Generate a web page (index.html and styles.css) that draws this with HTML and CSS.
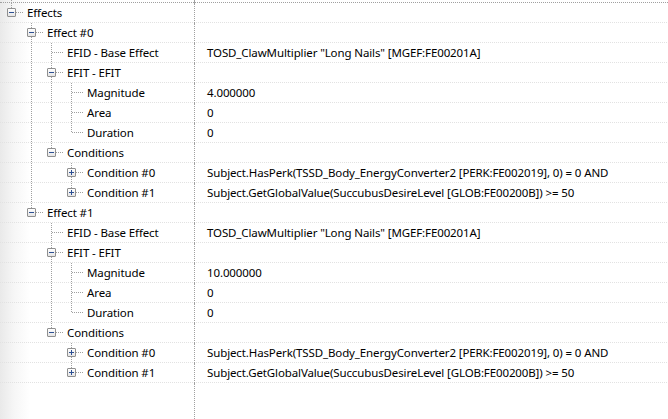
FILE: index.html
```html
<!DOCTYPE html>
<html lang="en">
  <head>
    <meta charset="UTF-8" />
    <title>Record View</title>
    <link rel="stylesheet" href="styles.css">
  </head>
  <body>
    <div class="tree">
      <div class="row pre"><div class="name"></div><div class="value"></div></div>

      <div class="row">
        <div class="name"><span class="conn last"><span class="box"></span></span><span class="label">Effects</span></div>
        <div class="value"></div>
      </div>
      <div class="row">
        <div class="name"><span class="ind"></span><span class="conn mid"><span class="box"></span></span><span class="label">Effect #0</span></div>
        <div class="value"></div>
      </div>
      <div class="row">
        <div class="name"><span class="ind"></span><span class="pipe"></span><span class="conn mid leaf"></span><span class="label">EFID - Base Effect</span></div>
        <div class="value">TOSD_ClawMultiplier "Long Nails" [MGEF:FE00201A]</div>
      </div>
      <div class="row">
        <div class="name"><span class="ind"></span><span class="pipe"></span><span class="conn mid"><span class="box"></span></span><span class="label">EFIT - EFIT</span></div>
        <div class="value"></div>
      </div>
      <div class="row">
        <div class="name"><span class="ind"></span><span class="pipe"></span><span class="pipe"></span><span class="conn mid leaf"></span><span class="label">Magnitude</span></div>
        <div class="value">4.000000</div>
      </div>
      <div class="row">
        <div class="name"><span class="ind"></span><span class="pipe"></span><span class="pipe"></span><span class="conn mid leaf"></span><span class="label">Area</span></div>
        <div class="value">0</div>
      </div>
      <div class="row">
        <div class="name"><span class="ind"></span><span class="pipe"></span><span class="pipe"></span><span class="conn last leaf"></span><span class="label">Duration</span></div>
        <div class="value">0</div>
      </div>
      <div class="row">
        <div class="name"><span class="ind"></span><span class="pipe"></span><span class="conn last"><span class="box"></span></span><span class="label">Conditions</span></div>
        <div class="value"></div>
      </div>
      <div class="row">
        <div class="name"><span class="ind"></span><span class="pipe"></span><span class="ind"></span><span class="conn mid"><span class="box plus"></span></span><span class="label">Condition #0</span></div>
        <div class="value">Subject.HasPerk(TSSD_Body_EnergyConverter2 [PERK:FE002019], 0) = 0 AND</div>
      </div>
      <div class="row">
        <div class="name"><span class="ind"></span><span class="pipe"></span><span class="ind"></span><span class="conn last"><span class="box plus"></span></span><span class="label">Condition #1</span></div>
        <div class="value">Subject.GetGlobalValue(SuccubusDesireLevel [GLOB:FE00200B]) &gt;= 50</div>
      </div>

      <div class="row">
        <div class="name"><span class="ind"></span><span class="conn last"><span class="box"></span></span><span class="label">Effect #1</span></div>
        <div class="value"></div>
      </div>
      <div class="row">
        <div class="name"><span class="ind"></span><span class="ind"></span><span class="conn mid leaf"></span><span class="label">EFID - Base Effect</span></div>
        <div class="value">TOSD_ClawMultiplier "Long Nails" [MGEF:FE00201A]</div>
      </div>
      <div class="row">
        <div class="name"><span class="ind"></span><span class="ind"></span><span class="conn mid"><span class="box"></span></span><span class="label">EFIT - EFIT</span></div>
        <div class="value"></div>
      </div>
      <div class="row">
        <div class="name"><span class="ind"></span><span class="ind"></span><span class="pipe"></span><span class="conn mid leaf"></span><span class="label">Magnitude</span></div>
        <div class="value">10.000000</div>
      </div>
      <div class="row">
        <div class="name"><span class="ind"></span><span class="ind"></span><span class="pipe"></span><span class="conn mid leaf"></span><span class="label">Area</span></div>
        <div class="value">0</div>
      </div>
      <div class="row">
        <div class="name"><span class="ind"></span><span class="ind"></span><span class="pipe"></span><span class="conn last leaf"></span><span class="label">Duration</span></div>
        <div class="value">0</div>
      </div>
      <div class="row">
        <div class="name"><span class="ind"></span><span class="ind"></span><span class="conn last"><span class="box"></span></span><span class="label">Conditions</span></div>
        <div class="value"></div>
      </div>
      <div class="row">
        <div class="name"><span class="ind"></span><span class="ind"></span><span class="ind"></span><span class="conn mid"><span class="box plus"></span></span><span class="label">Condition #0</span></div>
        <div class="value">Subject.HasPerk(TSSD_Body_EnergyConverter2 [PERK:FE002019], 0) = 0 AND</div>
      </div>
      <div class="row">
        <div class="name"><span class="ind"></span><span class="ind"></span><span class="ind"></span><span class="conn last"><span class="box plus"></span></span><span class="label">Condition #1</span></div>
        <div class="value">Subject.GetGlobalValue(SuccubusDesireLevel [GLOB:FE00200B]) &gt;= 50</div>
      </div>

      <div class="row filler"><div class="name"></div><div class="value"></div></div>
    </div>
  </body>
</html>
```

FILE: styles.css
```css
/* Page */
body {
  margin: 0;
  font-family: "Segoe UI", "Noto Sans", sans-serif;
  font-size: 11.5px;
  letter-spacing: -0.12px;
  color: #000000;
  background: linear-gradient(to right, #e9e9e9 0, #f6f6f6 14px, #ffffff 30px);
}

/* Tree grid */
.tree {
  --dv: repeating-linear-gradient(to bottom, #a0a0a0 0 1px, transparent 1px 2px);
  --dh: repeating-linear-gradient(to right, #a0a0a0 0 1px, transparent 1px 2px);
  --sep: repeating-linear-gradient(to right, #e2e2e2 0 1px, transparent 1px 2px);
  display: flex;
  flex-direction: column;
  min-height: 100vh;
}

.row {
  display: flex;
  height: 20px;
  background: var(--sep) 0 100% / 100% 1px no-repeat;
}

.row .name {
  width: 194px;
  flex-shrink: 0;
  display: flex;
  align-items: stretch;
  border-right: 1px dotted #a0a0a0;
  white-space: nowrap;
}

.row .value {
  flex: 1;
  padding-left: 12px;
  line-height: 19px;
  white-space: nowrap;
}

/* top line, scrolled row above */
.pre {
  height: 2px;
  background: none;
  border-bottom: 1px dotted #a0a0a0;
}

.pre .name {
  background: var(--dv) 11px 0 / 1px 100% no-repeat;
}

.filler {
  flex: 1;
  background: none;
}

/* Tree guides */
.ind,
.pipe {
  width: 20px;
  flex-shrink: 0;
}

.pipe {
  background: var(--dv) 11px 0 / 1px 100% no-repeat;
}

.conn {
  width: 24px;
  flex-shrink: 0;
  display: flex;
  align-items: flex-start;
  padding: 5px 0 0 7px;
  box-sizing: border-box;
}

.conn.mid {
  background:
    var(--dh) 12px 9px / 12px 1px no-repeat,
    var(--dv) 11px 0 / 1px 100% no-repeat;
}

.conn.last {
  background:
    var(--dh) 12px 9px / 12px 1px no-repeat,
    var(--dv) 11px 0 / 1px 10px no-repeat;
}

.label {
  padding-left: 3px;
  line-height: 19px;
}

/* Expander boxes */
.box {
  position: relative;
  width: 9px;
  height: 9px;
  box-sizing: border-box;
  border: 1px solid #8f8f8f;
  border-radius: 1px;
  background: linear-gradient(to bottom, #ffffff, #e4e4e4);
}

.box::before {
  content: "";
  position: absolute;
  left: 1px;
  top: 3px;
  width: 5px;
  height: 1px;
  background: #2c4f93;
}

.box.plus::after {
  content: "";
  position: absolute;
  left: 3px;
  top: 1px;
  width: 1px;
  height: 5px;
  background: #2c4f93;
}
```
